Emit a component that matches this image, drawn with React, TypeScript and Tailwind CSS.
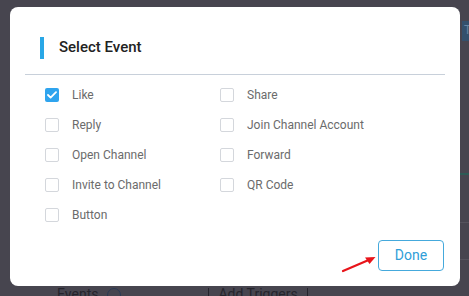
import React from "react";

const left = ["Like", "Reply", "Open Channel", "Invite to Channel", "Button"];
const right = ["Share", "Join Channel Account", "Forward", "QR Code"];

function Check({ label, checked }: { label: string; checked?: boolean }) {
  return (
    <div className="flex items-center h-[30px]">
      {checked ? (
        <span className="w-[14px] h-[14px] rounded-[2px] bg-[#2fa4ee] flex items-center justify-center">
          <svg width="10" height="8" viewBox="0 0 10 8" fill="none">
            <path d="M1 4l2.6 2.6L9 1.2" stroke="white" strokeWidth="1.8" strokeLinecap="round" strokeLinejoin="round" />
          </svg>
        </span>
      ) : (
        <span className="w-[14px] h-[14px] rounded-[2px] border border-[#d4d7dc] bg-white" />
      )}
      <span className="ml-[13px] text-[12px] text-[#6b6b6b]">{label}</span>
    </div>
  );
}

export default function App() {
  return (
    <div className="relative w-[469px] h-[296px] overflow-hidden bg-[#47454f]" style={{ fontFamily: "Roboto, 'Noto Sans', sans-serif" }}>
      {/* page behind the overlay */}
      <div className="absolute left-[462px] top-[21px] w-[20px] h-[20px] bg-[#34506c] text-[#6a86a2] text-[12px] pl-[2px]">T</div>
      <div className="absolute left-[460px] top-[173px] w-[20px] h-[2px] bg-[#2d5a55]" />
      <div className="absolute left-[460px] top-[222px] w-[20px] h-px bg-[#55535d]" />
      <div className="absolute left-[460px] top-[259px] w-[20px] h-px bg-[#55535d]" />
      <div className="absolute left-[57px] top-[284px] flex items-center text-[14px] text-[#25242c]">
        <span>Events</span>
        <span className="ml-[9px] w-[14px] h-[14px] rounded-full border border-[#2a3a55]" />
        <span className="ml-[87px] h-[14px] w-px bg-[#25242c]" />
        <span className="ml-[9px]">Add Triggers</span>
        <span className="ml-[9px] h-[14px] w-px bg-[#25242c]" />
      </div>

      {/* modal */}
      <div className="absolute left-[10px] top-[7px] w-[450px] h-[279px] bg-white rounded-[8px] flex flex-col">
        <div className="flex items-center h-[67px] pl-[30px] pt-[14px]">
          <span className="w-[4px] h-[22px] bg-[#29a7e6]" />
          <span className="ml-[15px] text-[15px] font-medium text-[#222]">Select Event</span>
        </div>
        <div className="mx-[15px] h-px bg-[#c8d0da]" />
        <div className="flex pl-[35px] pt-[5px]">
          <div className="w-[175px] flex flex-col">
            {left.map((l, i) => (
              <Check key={l} label={l} checked={i === 0} />
            ))}
          </div>
          <div className="flex flex-col">
            {right.map((l) => (
              <Check key={l} label={l} />
            ))}
          </div>
        </div>
        <div className="flex-1" />
        <div className="flex justify-end pr-[16px] pb-[15px] relative">
          <button className="w-[66px] h-[31px] border border-[#45a9dc] rounded-[4px] text-[14px] text-[#2f9ed8]">Done</button>
          <svg className="absolute left-[331px] top-[14px]" width="36" height="20" viewBox="0 0 36 20">
            <path d="M2 17L30 5" stroke="#e8141a" strokeWidth="2.2" strokeLinecap="round" />
            <path d="M34.5 3L24 3.5L28.5 10Z" fill="#e8141a" />
          </svg>
        </div>
      </div>
    </div>
  );
}
